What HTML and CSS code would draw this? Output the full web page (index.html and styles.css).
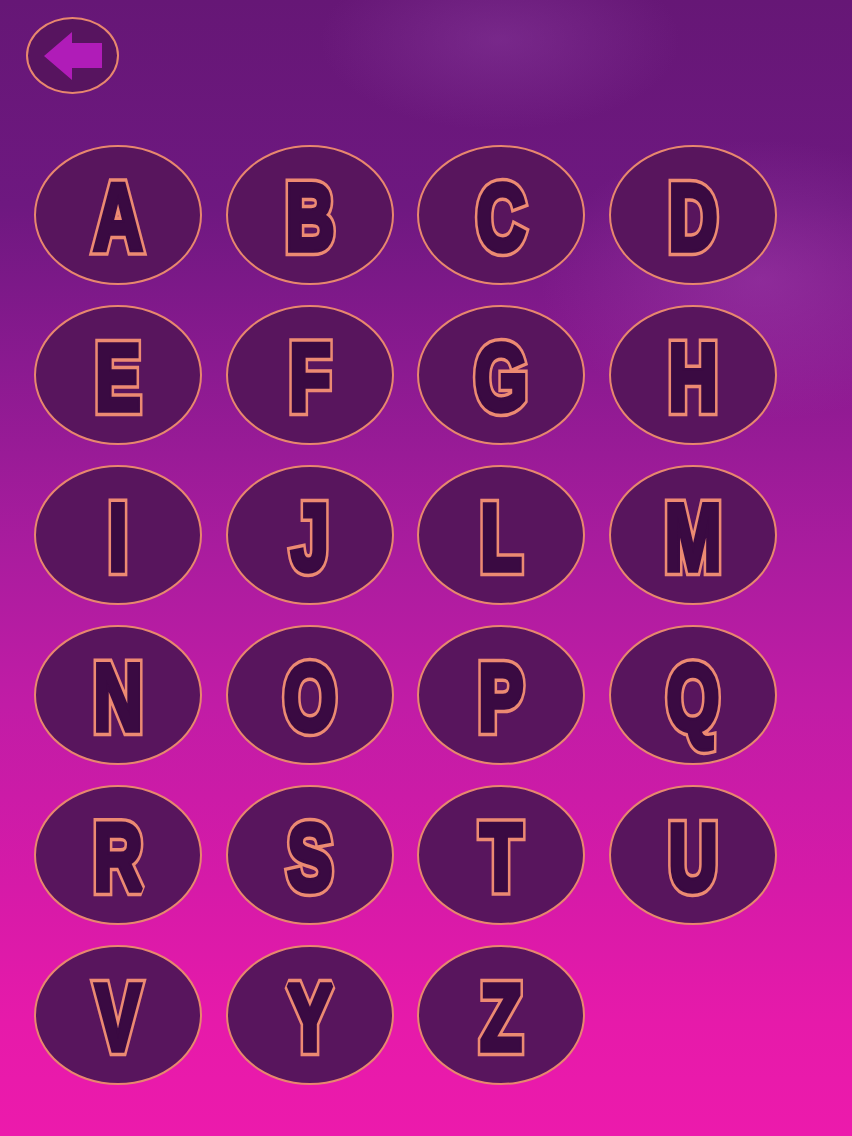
FILE: index.html
```html
<!DOCTYPE html>
<html>
<head>
<meta charset="utf-8">
<link rel="stylesheet" href="styles.css">
</head>
<body>
<div class="page">
  <div class="top">
    <button class="back" aria-label="Back">
      <svg width="93" height="77" viewBox="0 0 93 77"><path d="M18 39 L46 15 L46 26 L76 26 L76 51 L46 51 L46 63 Z" fill="#b01cb8"/></svg>
    </button>
  </div>
  <div class="grid">
    <div class="key"><svg viewBox="0 0 164 136"><g transform="translate(82 103) scale(1 1.4)"><text class="ring">A</text><text class="fill">A</text></g></svg></div>
    <div class="key"><svg viewBox="0 0 164 136"><g transform="translate(82 103) scale(1 1.4)"><text class="ring">B</text><text class="fill">B</text></g></svg></div>
    <div class="key"><svg viewBox="0 0 164 136"><g transform="translate(82 103) scale(1 1.4)"><text class="ring">C</text><text class="fill">C</text></g></svg></div>
    <div class="key"><svg viewBox="0 0 164 136"><g transform="translate(82 103) scale(1 1.4)"><text class="ring">D</text><text class="fill">D</text></g></svg></div>
    <div class="key"><svg viewBox="0 0 164 136"><g transform="translate(82 103) scale(1 1.4)"><text class="ring">E</text><text class="fill">E</text></g></svg></div>
    <div class="key"><svg viewBox="0 0 164 136"><g transform="translate(82 103) scale(1 1.4)"><text class="ring">F</text><text class="fill">F</text></g></svg></div>
    <div class="key"><svg viewBox="0 0 164 136"><g transform="translate(82 103) scale(1 1.4)"><text class="ring">G</text><text class="fill">G</text></g></svg></div>
    <div class="key"><svg viewBox="0 0 164 136"><g transform="translate(82 103) scale(1 1.4)"><text class="ring">H</text><text class="fill">H</text></g></svg></div>
    <div class="key"><svg viewBox="0 0 164 136"><g transform="translate(82 103) scale(1 1.4)"><text class="ring">I</text><text class="fill">I</text></g></svg></div>
    <div class="key"><svg viewBox="0 0 164 136"><g transform="translate(82 103) scale(1 1.4)"><text class="ring">J</text><text class="fill">J</text></g></svg></div>
    <div class="key"><svg viewBox="0 0 164 136"><g transform="translate(82 103) scale(1 1.4)"><text class="ring">L</text><text class="fill">L</text></g></svg></div>
    <div class="key"><svg viewBox="0 0 164 136"><g transform="translate(82 103) scale(1 1.4)"><text class="ring">M</text><text class="fill">M</text></g></svg></div>
    <div class="key"><svg viewBox="0 0 164 136"><g transform="translate(82 103) scale(1 1.4)"><text class="ring">N</text><text class="fill">N</text></g></svg></div>
    <div class="key"><svg viewBox="0 0 164 136"><g transform="translate(82 103) scale(1 1.4)"><text class="ring">O</text><text class="fill">O</text></g></svg></div>
    <div class="key"><svg viewBox="0 0 164 136"><g transform="translate(82 103) scale(1 1.4)"><text class="ring">P</text><text class="fill">P</text></g></svg></div>
    <div class="key"><svg viewBox="0 0 164 136"><g transform="translate(82 103) scale(1 1.4)"><text class="ring">Q</text><text class="fill">Q</text></g></svg></div>
    <div class="key"><svg viewBox="0 0 164 136"><g transform="translate(82 103) scale(1 1.4)"><text class="ring">R</text><text class="fill">R</text></g></svg></div>
    <div class="key"><svg viewBox="0 0 164 136"><g transform="translate(82 103) scale(1 1.4)"><text class="ring">S</text><text class="fill">S</text></g></svg></div>
    <div class="key"><svg viewBox="0 0 164 136"><g transform="translate(82 103) scale(1 1.4)"><text class="ring">T</text><text class="fill">T</text></g></svg></div>
    <div class="key"><svg viewBox="0 0 164 136"><g transform="translate(82 103) scale(1 1.4)"><text class="ring">U</text><text class="fill">U</text></g></svg></div>
    <div class="key"><svg viewBox="0 0 164 136"><g transform="translate(82 103) scale(1 1.4)"><text class="ring">V</text><text class="fill">V</text></g></svg></div>
    <div class="key"><svg viewBox="0 0 164 136"><g transform="translate(82 103) scale(1 1.4)"><text class="ring">Y</text><text class="fill">Y</text></g></svg></div>
    <div class="key"><svg viewBox="0 0 164 136"><g transform="translate(82 103) scale(1 1.4)"><text class="ring">Z</text><text class="fill">Z</text></g></svg></div>
  </div>
</div>
</body>
</html>
```
FILE: styles.css
```css
html, body {
  margin: 0;
  padding: 0;
}
body {
  width: 852px;
  height: 1136px;
  overflow: hidden;
  background:
    radial-gradient(ellipse 180px 90px at 500px 40px, rgba(140,60,160,0.45), rgba(140,60,160,0) 100%),
    radial-gradient(ellipse 220px 140px at 760px 280px, rgba(170,70,180,0.40), rgba(170,70,180,0) 100%),
    linear-gradient(to bottom, #661776 0%, #6e1880 18%, #8a1a90 32%, #a91c9e 48%, #c11ca6 62%, #d61aa8 78%, #e61aaa 90%, #ec1aac 100%);
  font-family: "Liberation Sans", Arial, sans-serif;
}
.page {
  display: flex;
  flex-direction: column;
}
.top {
  padding: 17px 0 0 26px;
  height: 77px;
}
.back {
  width: 93px;
  height: 77px;
  padding: 0;
  border: 2px solid #e8876e;
  border-radius: 50%;
  background: #57145f;
  box-sizing: border-box;
  display: flex;
  align-items: center;
  justify-content: center;
  overflow: hidden;
}
.back svg {
  display: block;
  flex: none;
}
.grid {
  margin: 51px 0 0 34px;
  display: grid;
  grid-template-columns: repeat(4, 168px);
  column-gap: 23.5px;
  row-gap: 20px;
}
.key {
  width: 168px;
  height: 140px;
  box-sizing: border-box;
  border: 2px solid #e8876e;
  border-radius: 50%;
  background: #58155d;
}
.key svg {
  display: block;
  width: 164px;
  height: 136px;
  overflow: visible;
}
.key text {
  font-family: "Liberation Sans", Arial, sans-serif;
  font-weight: bold;
  font-size: 68px;
  text-anchor: middle;
  stroke-linejoin: miter;
  stroke-miterlimit: 2;
  paint-order: stroke fill;
}
.key .ring {
  fill: #3a0a42;
  stroke: #ec8a72;
  stroke-width: 9px;
}
.key .fill {
  fill: #3a0a42;
  stroke: #3a0a42;
  stroke-width: 4px;
}
```
